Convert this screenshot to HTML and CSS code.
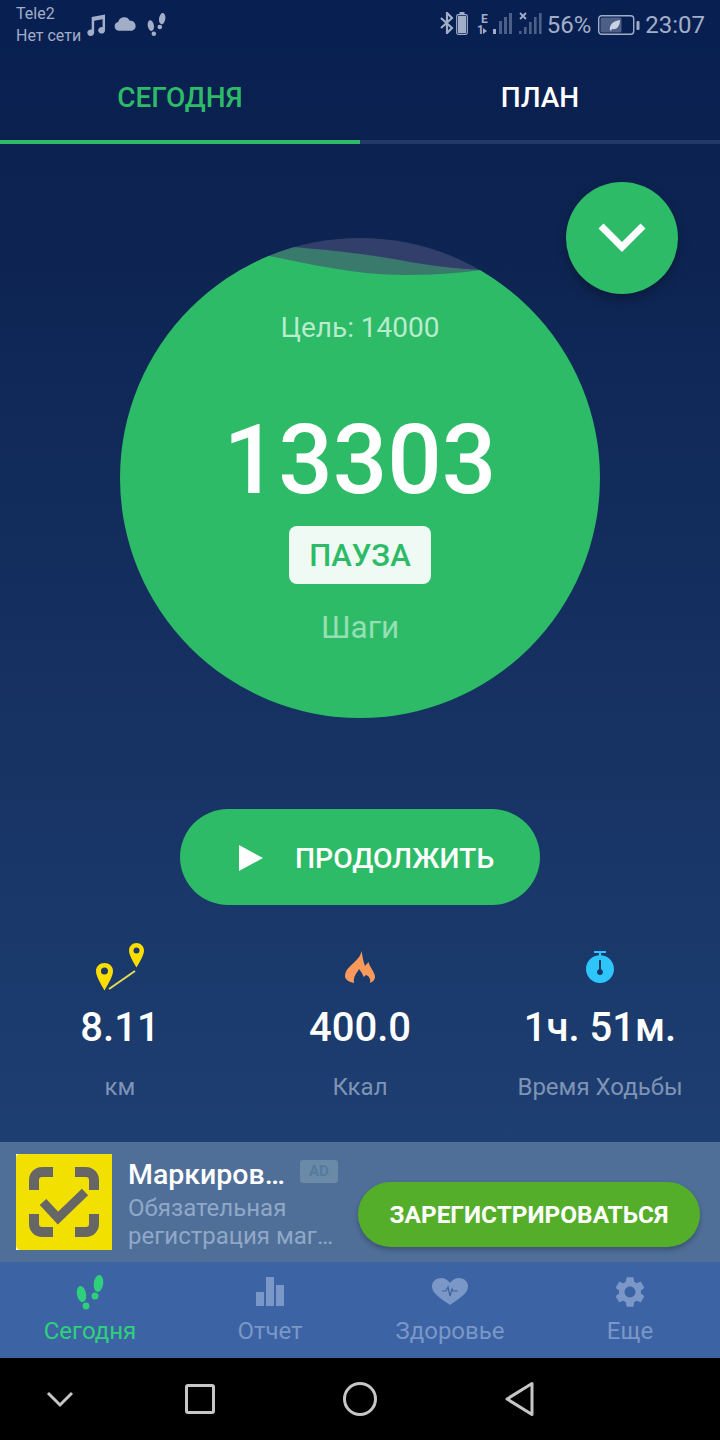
FILE: index.html
```html
<!DOCTYPE html>
<html lang="en">
<head>
    <meta charset="UTF-8">
    <title>Шаги</title>
    <link rel="stylesheet" href="styles.css">
</head>
<body>
    <svg class="defs" width="0" height="0">
        <symbol id="feet" viewBox="0 0 28 36">
            <ellipse cx="5.5" cy="19" rx="4.6" ry="8.2" transform="rotate(-10 5.5 19)"/>
            <circle cx="10" cy="31" r="3.4"/>
            <ellipse cx="22.5" cy="8.5" rx="4.7" ry="8.5" transform="rotate(8 22.5 8.5)"/>
            <circle cx="19" cy="21" r="3.5"/>
        </symbol>
    </svg>

    <div class="screen">
        <div class="statusbar">
            <div class="status-left">
                <div class="carrier">
                    <div>Tele2</div>
                    <div>Нет сети</div>
                </div>
                <svg class="ic-note" viewBox="0 0 22 24"><path d="M7 3.5 21 1v16.5a3.6 3.4 0 1 1-2.6-3.2V6L9.6 7.6v12.4A3.6 3.4 0 1 1 7 16.8z"/></svg>
                <svg class="ic-cloud" viewBox="0 0 24 14"><path d="M5 14a4.6 4.6 0 0 1-.6-9.1A6.4 6.4 0 0 1 16.4 3.6 5.4 5.4 0 0 1 19 14z"/></svg>
                <svg class="ic-feet-small"><use href="#feet"/></svg>
            </div>
            <div class="status-right">
                <svg class="ic-bt" viewBox="0 0 14 22"><path d="M1 6l11 10-5 5V1l5 5L1 16" fill="none" stroke="currentColor" stroke-width="2.2"/></svg>
                <svg class="ic-minibat" viewBox="0 0 12 23"><rect x="3.5" y="0" width="5" height="2.5"/><rect x="0.7" y="2.7" width="10.6" height="19.6" rx="1.5" fill="none" stroke="currentColor" stroke-width="1.2"/><rect x="2" y="4" width="8" height="17"/></svg>
                <svg class="ic-signal" viewBox="0 0 36 26">
                    <text x="5" y="11" class="sig-letter">E</text>
                    <text x="1" y="22" class="sig-letter">1</text>
                    <path d="M7 16l4 3-4 3z"/>
                    <rect x="17" y="17" width="3" height="5"/>
                    <rect class="dim" x="23" y="9" width="3" height="13"/>
                    <rect class="dim" x="28" y="5" width="3" height="17"/>
                    <rect class="dim" x="33" y="1" width="3" height="21"/>
                </svg>
                <svg class="ic-signal2" viewBox="0 0 23 23">
                    <path d="M1 1l6 6M7 1L1 7" stroke="currentColor" stroke-width="1.8" fill="none"/>
                    <rect class="dim" x="0" y="19" width="2.6" height="3"/>
                    <rect class="dim" x="5" y="15" width="2.6" height="7"/>
                    <rect class="dim" x="10" y="10" width="2.6" height="12"/>
                    <rect class="dim" x="15" y="5" width="2.6" height="17"/>
                    <rect class="dim" x="20" y="1" width="2.6" height="21"/>
                </svg>
                <span class="status-num">56%</span>
                <svg class="ic-battery" viewBox="0 0 42 20">
                    <rect x="0.7" y="0.7" width="35" height="18.6" rx="3" fill="none" stroke="currentColor" stroke-width="1.4"/>
                    <rect class="dim" x="2.5" y="2.5" width="21" height="15" rx="1.5"/>
                    <path class="leaf" d="M12 15c-1-5 3-9 10-10 0 6-3 10-8 9l-1 2z"/>
                    <rect x="38.5" y="6" width="3" height="9" rx="1"/>
                </svg>
                <span class="status-num clock">23:07</span>
            </div>
        </div>

        <div class="tabs">
            <div class="tab active">СЕГОДНЯ</div>
            <div class="tab">ПЛАН</div>
        </div>

        <div class="main">
            <button class="fab">
                <svg viewBox="0 0 48 30"><path d="M3 3l21 21L45 3" fill="none" stroke="#fff" stroke-width="7"/></svg>
            </button>

            <div class="circle">
                <svg class="circle-bg" viewBox="0 0 480 480">
                    <defs><clipPath id="disc"><circle cx="240" cy="240" r="240"/></clipPath></defs>
                    <g clip-path="url(#disc)">
                        <rect width="480" height="60" fill="#333f6b"/>
                        <path d="M100 0 160 8C200 11 250 16 290 24 320 29 340 31 362 32V60H100z" fill="#397a6d"/>
                        <path d="M144 17C190 26 240 38 290 37 320 37 345 34 362 32L480 60V480H0V60z" fill="#2dbb67"/>
                    </g>
                </svg>
                <div class="goal">Цель: 14000</div>
                <div class="steps">13303</div>
                <div class="pause">ПАУЗА</div>
                <div class="steps-label">Шаги</div>
            </div>

            <button class="resume">
                <svg viewBox="0 0 24 26"><path d="M0 0l24 13L0 26z" fill="#fff"/></svg>
                <span>ПРОДОЛЖИТЬ</span>
            </button>

            <div class="stats">
                <div class="stat">
                    <div class="stat-icon">
                        <svg class="ic-route" viewBox="0 0 48 48">
                            <path d="M13 46l26-18" stroke="#e8dc55" stroke-width="2" fill="none"/>
                            <path fill-rule="evenodd" fill="#fbdd00" d="M8.5 20c4.700 0 8.500 3.500 8.500 8 0 5-4.500 12.500-8.500 19.500C4.500 40.500 0 33 0 28 0 23.500 3.800 20 8.500 20zm0 4.500a3.500 3.500 0 1 0 0 7 3.500 3.500 0 0 0 0-7z"/>
                            <path fill-rule="evenodd" fill="#fbdd00" d="M40.500 0c4.100 0 7.500 3.300 7.500 7.500 0 4.500-4 11-7.500 17C37 18.500 33 12 33 7.500 33 3.300 36.400 0 40.500 0zm0 4.500a3 3 0 1 0 0 6 3 3 0 0 0 0-6z"/>
                        </svg>
                    </div>
                    <div class="stat-value">8.11</div>
                    <div class="stat-label">км</div>
                </div>
                <div class="stat">
                    <div class="stat-icon">
                        <svg class="ic-flame" viewBox="0 0 30 32"><path fill="#f99a5c" d="M16.500 0C17.500 5 18 10 20 15L23.500 11C25 17 30 21 30 26 30 29 27.500 31 25 32 26 28 24 25 21 24L18.500 26C18 23 16 21 14 18 12 22 8 25 9 32 4 31 0 28.500 0 25 0 18 7 14 10.500 10 13.500 7 16 4 16.500 0z"/></svg>
                    </div>
                    <div class="stat-value">400.0</div>
                    <div class="stat-label">Ккал</div>
                </div>
                <div class="stat">
                    <div class="stat-icon">
                        <svg class="ic-watch" viewBox="0 0 28 32">
                            <path fill="#2ec5fb" d="M8 0h12v2h-5v2.200C22.300 4.700 28 10.400 28 18c0 7.700-6.300 14-14 14S0 25.700 0 18C0 10.400 5.700 4.700 13 4.200V2H8z"/>
                            <path fill="#173768" d="M13 9h2v9.200a3 3 0 1 1-2 0z"/>
                        </svg>
                    </div>
                    <div class="stat-value">1ч. 51м.</div>
                    <div class="stat-label">Время Ходьбы</div>
                </div>
            </div>
        </div>

        <div class="ad">
            <div class="ad-logo">
                <svg viewBox="0 0 96 96">
                    <rect width="96" height="96" fill="#f2e100"/>
                    <path d="M0 0h4Q0 0 0 4zM0 96v-5Q0 96 5 96z" fill="#fff"/>
                    <path d="M37 18H26a8 8 0 0 0-8 8v10M59 18h11a8 8 0 0 1 8 8v10M37 78H26a8 8 0 0 1-8-8V60M59 78h11a8 8 0 0 0 8-8V60" fill="none" stroke="#666" stroke-width="10"/>
                    <path d="M27 48l15 16 27-26" fill="none" stroke="#666" stroke-width="9"/>
                </svg>
            </div>
            <div class="ad-text">
                <div class="ad-head">
                    <span class="ad-title">Маркиров…</span>
                    <span class="ad-badge">AD</span>
                </div>
                <div class="ad-desc">Обязательная</div>
                <div class="ad-desc">регистрация маг…</div>
            </div>
            <button class="ad-cta">ЗАРЕГИСТРИРОВАТЬСЯ</button>
        </div>

        <div class="bottomnav">
            <div class="nav-item active">
                <svg class="ic-feet"><use href="#feet"/></svg>
                <span>Сегодня</span>
            </div>
            <div class="nav-item">
                <svg viewBox="0 0 36 36"><path d="M4 17h8v14H4zM14 2h8v29h-8zM24 10h8v21h-8z"/></svg>
                <span>Отчет</span>
            </div>
            <div class="nav-item">
                <svg viewBox="0 0 36 36">
                    <path d="M18 30C10 24 0 19 0 11.500 0 6.500 4 3 9 3 13 3 16 5 18 8 20 5 23 3 27 3 32 3 36 6.500 36 11.500 36 19 26 24 18 30z"/>
                    <path d="M10 16h4l2-4 2 9 2-7 1 2h5" fill="none" stroke="#3f639c" stroke-width="1.2"/>
                </svg>
                <span>Здоровье</span>
            </div>
            <div class="nav-item">
                <svg class="ic-gear" viewBox="1.5 1.5 21 21"><path d="M19.14 12.94c.04-.3.06-.61.06-.94 0-.32-.02-.64-.07-.94l2.03-1.58c.18-.14.23-.41.12-.61l-1.92-3.32c-.12-.22-.37-.29-.59-.22l-2.39.96c-.5-.38-1.03-.7-1.62-.94l-.36-2.54c-.04-.24-.24-.41-.48-.41h-3.84c-.24 0-.43.17-.47.41l-.36 2.54c-.59.24-1.13.57-1.62.94l-2.39-.96c-.22-.08-.47 0-.59.22L2.74 8.87c-.12.21-.08.47.12.61l2.03 1.58c-.05.3-.09.63-.09.94s.02.64.07.94l-2.03 1.58c-.18.14-.23.41-.12.61l1.92 3.32c.12.22.37.29.59.22l2.39-.96c.5.38 1.03.7 1.62.94l.36 2.54c.05.24.24.41.48.41h3.84c.24 0 .44-.17.47-.41l.36-2.54c.59-.24 1.13-.56 1.62-.94l2.39.96c.22.08.47 0 .59-.22l1.92-3.32c.12-.22.07-.47-.12-.61l-2.01-1.58zM12 15.6c-1.98 0-3.6-1.62-3.6-3.6s1.62-3.6 3.6-3.6 3.6 1.62 3.6 3.6-1.62 3.6-3.6 3.6z"/></svg>
                <span>Еще</span>
            </div>
        </div>

        <div class="sysnav">
            <svg viewBox="0 0 720 82">
                <g fill="none" stroke="#c6c6c6" stroke-width="3">
                    <path d="M48 35l12 12 12-12"/>
                    <rect x="186.5" y="27.5" width="27" height="27" rx="1.5"/>
                    <circle cx="360" cy="41" r="15.5"/>
                    <path d="M532 25.5v31L507 41z" stroke-linejoin="round"/>
                </g>
            </svg>
        </div>
    </div>
</body>
</html>
```

FILE: styles.css
```css
* {
    box-sizing: border-box;
}
body {
    margin: 0;
    font-family: Roboto, "Noto Sans", sans-serif;
    background: #000;
}
button {
    font-family: inherit;
    border: none;
    padding: 0;
}
.defs {
    position: absolute;
}
.screen {
    width: 720px;
    height: 1440px;
    display: flex;
    flex-direction: column;
    overflow: hidden;
    background: linear-gradient(180deg, #071f51 0%, #0c2250 12%, #1e3f72 80%);
}

/* status bar */
.statusbar {
    height: 48px;
    display: flex;
    justify-content: space-between;
    color: #a2aec8;
    fill: #a2aec8;
}
.status-left, .status-right {
    display: flex;
    align-items: flex-start;
}
.status-left {
    padding-left: 16px;
}
.carrier {
    font-size: 16px;
    line-height: 22px;
    padding-top: 3px;
}
.ic-note {
    width: 21px;
    height: 24px;
    margin: 13px 0 0 4px;
}
.ic-cloud {
    width: 23px;
    height: 14px;
    margin: 17px 0 0 8px;
}
.ic-feet-small {
    width: 19px;
    height: 24px;
    margin: 13px 0 0 10px;
}
.status-right {
    padding-right: 15px;
}
.ic-bt {
    width: 14px;
    height: 22px;
    margin-top: 12px;
}
.ic-minibat {
    width: 12px;
    height: 23px;
    margin: 12px 0 0 2px;
}
.ic-signal {
    width: 36px;
    height: 26px;
    margin: 12px 0 0 8px;
}
.ic-signal2 {
    width: 23px;
    height: 23px;
    margin: 12px 0 0 7px;
}
.sig-letter {
    font-size: 12px;
    font-weight: 700;
}
.dim {
    opacity: 0.45;
}
.status-num {
    font-size: 24px;
    line-height: 26px;
    margin: 12px 0 0 5px;
}
.ic-battery {
    width: 42px;
    height: 20px;
    margin: 15px 0 0 7px;
}
.leaf {
    fill: #c9d2e2;
}

/* tabs */
.tabs {
    display: flex;
    height: 96px;
}
.tab {
    flex: 1;
    display: flex;
    align-items: center;
    justify-content: center;
    font-size: 28px;
    font-weight: 500;
    color: #fff;
    border-bottom: 4px solid #233967;
    padding-top: 7px;
}
.tab.active {
    color: #2dbb67;
    border-bottom-color: #2dbb67;
}

/* main block */
.main {
    position: relative;
    height: 998px;
    display: flex;
    flex-direction: column;
    align-items: center;
    padding-top: 94px;
}
.fab {
    position: absolute;
    top: 38px;
    right: 42px;
    width: 112px;
    height: 112px;
    border-radius: 50%;
    background: #2dbb67;
    box-shadow: 0 6px 12px rgba(0, 0, 0, 0.28);
    display: flex;
    align-items: center;
    justify-content: center;
}
.fab svg {
    width: 48px;
    height: 30px;
}
.circle {
    position: relative;
    width: 480px;
    height: 480px;
    display: flex;
    flex-direction: column;
    align-items: center;
    padding-top: 75px;
}
.circle-bg {
    position: absolute;
    top: 0;
    left: 0;
    width: 480px;
    height: 480px;
}
.goal, .steps, .pause, .steps-label {
    position: relative;
}
.goal {
    font-size: 28px;
    line-height: 30px;
    color: #b9ecce;
}
.steps {
    font-size: 96px;
    line-height: 96px;
    font-weight: 500;
    color: #fff;
    margin-top: 69px;
}
.pause {
    width: 142px;
    height: 58px;
    margin-top: 18px;
    border-radius: 8px;
    background: rgba(255, 255, 255, 0.92);
    color: #2dbb67;
    font-size: 31px;
    font-weight: 500;
    display: flex;
    align-items: center;
    justify-content: center;
}
.steps-label {
    font-size: 31.5px;
    line-height: 36px;
    color: #96dfb5;
    margin-top: 26px;
}
.resume {
    width: 360px;
    height: 96px;
    margin-top: 91px;
    border-radius: 48px;
    background: #2dbb67;
    color: #fff;
    font-size: 28.3px;
    font-weight: 500;
    display: flex;
    align-items: center;
    padding: 2px 0 0 59px;
}
.resume svg {
    width: 24px;
    height: 26px;
    margin-right: 32px;
}
.stats {
    width: 720px;
    margin-top: 38px;
    display: grid;
    grid-template-columns: repeat(3, 1fr);
}
.stat {
    display: flex;
    flex-direction: column;
    align-items: center;
}
.stat-icon {
    height: 48px;
    display: flex;
    align-items: center;
}
.ic-route {
    width: 48px;
    height: 48px;
}
.ic-flame {
    width: 30px;
    height: 32px;
}
.ic-watch {
    width: 28px;
    height: 32px;
}
.stat-value {
    font-size: 40px;
    line-height: 44px;
    font-weight: 500;
    color: #fff;
    margin-top: 15px;
}
.stat-label {
    font-size: 24px;
    line-height: 30px;
    color: #7f93b4;
    margin-top: 22px;
}

/* ad */
.ad {
    position: relative;
    height: 120px;
    background: #4f6f98;
    display: flex;
    padding: 12px 20px 0 16px;
}
.ad-logo svg {
    display: block;
    width: 96px;
    height: 96px;
}
.ad-text {
    margin-left: 16px;
}
.ad-head {
    display: flex;
    align-items: center;
    height: 40px;
}
.ad-title {
    font-size: 28.5px;
    font-weight: 500;
    color: #fff;
}
.ad-badge {
    width: 38px;
    height: 23px;
    margin: -5px 0 0 15px;
    border-radius: 3px;
    background: #6a8aa8;
    color: #557a9e;
    font-size: 15px;
    font-weight: 700;
    text-align: center;
    line-height: 23px;
}
.ad-desc {
    font-size: 24px;
    line-height: 28px;
    color: #90a8c8;
}
.ad-cta {
    position: absolute;
    top: 40px;
    right: 20px;
    width: 342px;
    height: 65px;
    border-radius: 33px;
    background: #55ae2a;
    color: #fff;
    font-size: 24.4px;
    font-weight: 700;
    box-shadow: 0 3px 5px rgba(0, 0, 0, 0.25);
}

/* bottom nav */
.bottomnav {
    height: 96px;
    background: #3c63a3;
    display: grid;
    grid-template-columns: repeat(4, 180px);
}
.nav-item {
    display: flex;
    flex-direction: column;
    align-items: center;
    padding-top: 13px;
    color: #7a97c8;
    fill: #7a97c8;
    font-size: 24px;
}
.nav-item svg {
    width: 36px;
    height: 36px;
    display: block;
}
.nav-item span {
    line-height: 30px;
    margin-top: 5px;
}
.nav-item.active {
    color: #2fd07c;
    fill: #2fd07c;
}
.nav-item .ic-feet {
    width: 28px;
}
.nav-item .ic-gear {
    width: 32px;
    height: 32px;
    margin: 1px 0 3px;
}

/* system nav */
.sysnav {
    height: 82px;
    background: #000;
}
.sysnav svg {
    display: block;
    width: 720px;
    height: 82px;
}
```
